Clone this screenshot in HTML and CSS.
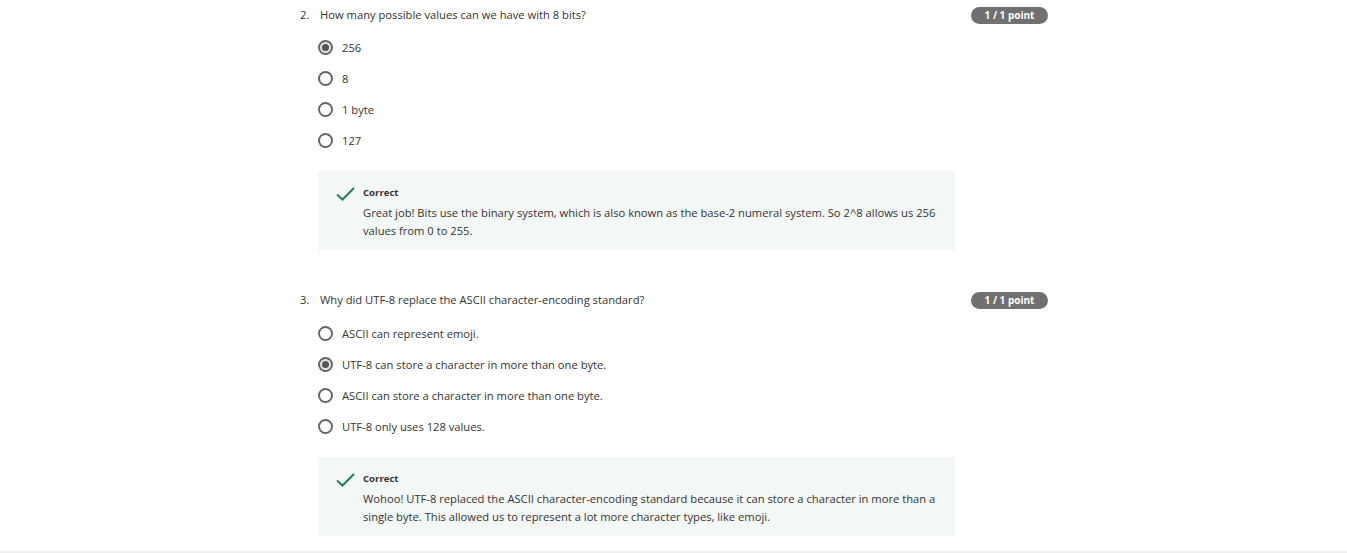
FILE: index.html
```html
<!DOCTYPE html>
<html>
<head>
<meta charset="utf-8">
<link rel="stylesheet" href="styles.css">
</head>
<body>
<div class="page">
  <div class="quiz">
    <section class="question">
      <div class="q-head">
        <span class="q-num">2.</span>
        <span class="q-text">How many possible values can we have with 8 bits?</span>
        <span class="badge">1 / 1 point</span>
      </div>
      <ul class="options">
        <li class="option"><span class="radio checked"></span><span>256</span></li>
        <li class="option"><span class="radio"></span><span>8</span></li>
        <li class="option"><span class="radio"></span><span>1 byte</span></li>
        <li class="option"><span class="radio"></span><span>127</span></li>
      </ul>
      <div class="feedback">
        <svg class="check" width="19" height="14" viewBox="0 0 19 14"><polyline points="1,7.5 6.5,12.5 18,1" fill="none" stroke="#1f8354" stroke-width="2"/></svg>
        <div class="fb-body">
          <div class="fb-title">Correct</div>
          <p class="fb-text">Great job! Bits use the binary system, which is also known as the base-2 numeral system. So 2^8 allows us 256 values from 0 to 255.</p>
        </div>
      </div>
    </section>
    <section class="question q3">
      <div class="q-head">
        <span class="q-num">3.</span>
        <span class="q-text">Why did UTF-8 replace the ASCII character-encoding standard?</span>
        <span class="badge">1 / 1 point</span>
      </div>
      <ul class="options">
        <li class="option"><span class="radio"></span><span>ASCII can represent emoji.</span></li>
        <li class="option"><span class="radio checked"></span><span>UTF-8 can store a character in more than one byte.</span></li>
        <li class="option"><span class="radio"></span><span>ASCII can store a character in more than one byte.</span></li>
        <li class="option"><span class="radio"></span><span>UTF-8 only uses 128 values.</span></li>
      </ul>
      <div class="feedback">
        <svg class="check" width="19" height="14" viewBox="0 0 19 14"><polyline points="1,7.5 6.5,12.5 18,1" fill="none" stroke="#1f8354" stroke-width="2"/></svg>
        <div class="fb-body">
          <div class="fb-title">Correct</div>
          <p class="fb-text">Wohoo! UTF-8 replaced the ASCII character-encoding standard because it can store a character in more than a single byte. This allowed us to represent a lot more character types, like emoji.</p>
        </div>
      </div>
    </section>
  </div>
  <div class="bottom-bar"></div>
</div>
</body>
</html>
```

FILE: styles.css
```css
html, body {
  margin: 0;
  padding: 0;
  background: #fff;
}
body {
  font-family: "Open Sans", "Noto Sans", sans-serif;
  font-size: 11.2px;
  color: #333;
  width: 1347px;
  height: 553px;
  overflow: hidden;
}
.page {
  display: flex;
  flex-direction: column;
  height: 553px;
}
.quiz {
  margin-left: 300px;
  width: 748px;
  padding-top: 6px;
  flex: 1;
}
.question.q3 {
  margin-top: 41px;
}
.q-head {
  display: flex;
  align-items: flex-start;
  line-height: 18px;
}
.q-num {
  width: 20px;
  flex: none;
}
.q-text {
  flex: 1;
}
.badge {
  margin-top: 1px;
  width: 77px;
  height: 17px;
  border-radius: 9px;
  background: #707070;
  color: #fff;
  font-weight: 700;
  font-size: 10px;
  line-height: 17px;
  text-align: center;
}
.options {
  list-style: none;
  margin: 8px 0 0 18px;
  padding: 0;
}
.q3 .options {
  margin-top: 9px;
}
.option {
  display: flex;
  align-items: center;
  gap: 9px;
  height: 31px;
}
.radio {
  width: 15px;
  height: 15px;
  box-sizing: border-box;
  border: 2px solid #666;
  border-radius: 50%;
  background: #fff;
  flex: none;
  display: flex;
  align-items: center;
  justify-content: center;
}
.radio.checked {
  background: #e6e6e6;
}
.radio.checked::after {
  content: "";
  width: 7px;
  height: 7px;
  border-radius: 50%;
  background: #555;
}
.feedback {
  margin: 15px 0 0 18px;
  width: 637px;
  box-sizing: border-box;
  background: #f3f8f6;
  padding: 13px 18px 10px 18px;
  display: flex;
  gap: 8px;
  align-items: flex-start;
}
.check {
  flex: none;
  margin-top: 3px;
}
.fb-body {
  flex: 1;
}
.fb-title {
  font-weight: 700;
  font-size: 9.6px;
  line-height: 18px;
}
.fb-text {
  margin: 2px 0 0 0;
  line-height: 18px;
}
.bottom-bar {
  height: 2px;
  background: #efefef;
  flex: none;
}
```
